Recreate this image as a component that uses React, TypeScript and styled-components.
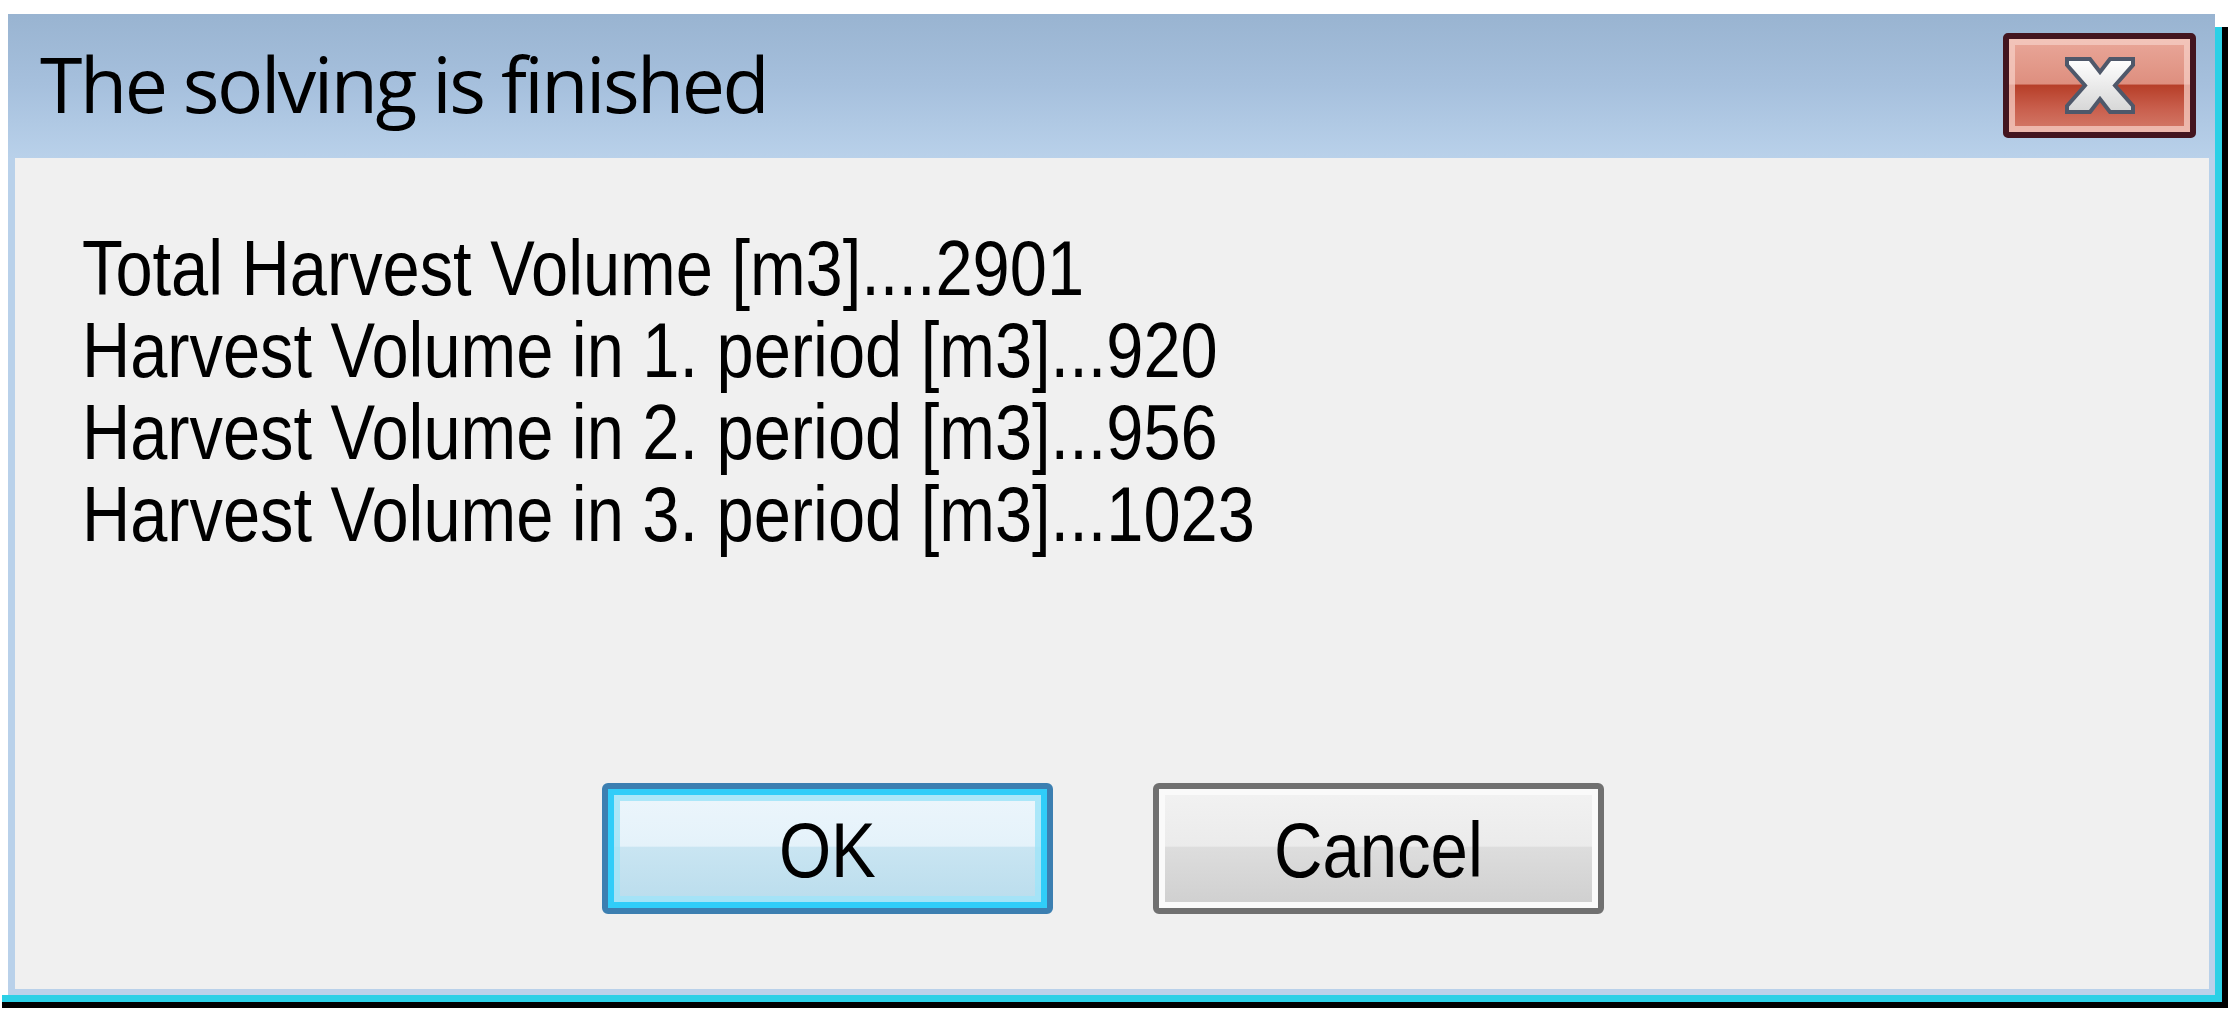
import React from "react";
import styled, { createGlobalStyle } from "styled-components";

const GlobalStyle = createGlobalStyle`
  html, body {
    margin: 0;
    padding: 0;
    background: #ffffff;
  }
  body {
    width: 2238px;
    height: 1021px;
    overflow: hidden;
  }
`;

const Page = styled.div`
  padding-top: 14px;
`;

const Window = styled.div`
  margin-left: 8px;
  width: 2207px;
  height: 981px;
  display: flex;
  flex-direction: column;
  background: #b9d1ea;
  box-shadow: 7px 13px 0 0 #2bd0e6, 13px 13px 0 0 #000000;
`;

const TitleBar = styled.div`
  height: 144px;
  flex-shrink: 0;
  display: flex;
  align-items: flex-start;
  padding: 0 19px 0 32px;
  background: linear-gradient(#99b4d1 0%, #a6c0dd 50%, #b9d1ea 100%);
`;

const Title = styled.div`
  padding-top: 17px;
  font-family: "Open Sans", "Noto Sans", sans-serif;
  font-size: 77px;
  line-height: 105px;
  letter-spacing: -2.5px;
  color: #000000;
  white-space: nowrap;
`;

const CloseButton = styled.div`
  margin-left: auto;
  margin-top: 19px;
  width: 193px;
  height: 105px;
  box-sizing: border-box;
  border: 6px solid #43151f;
  border-radius: 5px;
  display: flex;
  align-items: center;
  justify-content: center;
  background: linear-gradient(
    #e9a799 0%,
    #de8f7f 48%,
    #b73f29 50%,
    #c95f4d 75%,
    #d47b6a 100%
  );
  box-shadow: inset 0 0 0 6px rgba(246, 206, 196, 0.75);
`;

const Content = styled.div`
  flex: 1;
  margin: 0 6px 6px 7px;
  background: #f0f0f0;
  display: flex;
  flex-direction: column;
  padding: 69px 0 75px 67px;
  box-sizing: border-box;
`;

/* MS Sans Serif look: Arial metrics squeezed to the narrow width of the original */
const Lines = styled.div`
  font-family: "Liberation Sans", Arial, sans-serif;
  font-size: 78px;
  line-height: 82px;
  color: #000000;
  transform: scaleX(0.856);
  transform-origin: left top;
`;

const Line = styled.div`
  white-space: nowrap;
`;

const ButtonRow = styled.div`
  margin-top: auto;
  margin-left: 520px;
  display: flex;
  gap: 100px;
`;

const Button = styled.div<{ $primary?: boolean }>`
  width: 451px;
  height: 131px;
  box-sizing: border-box;
  border: 6px solid ${(p) => (p.$primary ? "#3c7fb1" : "#707070")};
  border-radius: 6px;
  display: flex;
  align-items: center;
  justify-content: center;
  font-family: "Liberation Sans", Arial, sans-serif;
  font-size: 78px;
  color: #000000;
  background: ${(p) =>
    p.$primary
      ? "linear-gradient(#edf6fc 0%, #e4f2fa 48%, #c9e5f2 49%, #b9dcec 100%)"
      : "linear-gradient(#f2f2f2 0%, #ebebeb 48%, #dddddd 49%, #cfcfcf 100%)"};
  box-shadow: ${(p) =>
    p.$primary
      ? "inset 0 0 0 6px #30cdf9, inset 0 0 0 12px rgba(160, 228, 248, 0.85)"
      : "inset 0 0 0 6px #fafafa"};
`;

const Label = styled.span`
  display: inline-block;
  transform: scaleX(0.86);
  margin-top: 4px;
`;

const BottomCyan = styled.div`
  margin-left: 2px;
  width: 2220px;
  height: 7px;
  background: #2bd0e6;
`;

const BottomBlack = styled.div`
  margin-left: 2px;
  width: 2226px;
  height: 6px;
  background: #000000;
`;

const CloseGlyph = () => (
  <svg width="70" height="57" viewBox="-1 -1 70 57">
    <defs>
      <linearGradient id="xfill" x1="0" y1="0" x2="0" y2="1">
        <stop offset="0" stopColor="#ffffff" />
        <stop offset="1" stopColor="#d6d6d6" />
      </linearGradient>
    </defs>
    <polygon
      points="1,1 24,1 34,14 44,1 67,1 67,7 49,27.5 67,48 67,54 44,54 34,41 24,54 1,54 1,48 19,27.5 1,7"
      fill="url(#xfill)"
      stroke="#4f586a"
      strokeWidth="4"
      strokeLinejoin="miter"
    />
  </svg>
);

export default function App() {
  return (
    <>
      <GlobalStyle />
      <Page>
        <Window>
          <TitleBar>
            <Title>The solving is finished</Title>
            <CloseButton>
              <CloseGlyph />
            </CloseButton>
          </TitleBar>
          <Content>
            <Lines>
              <Line>Total Harvest Volume [m3]....2901</Line>
              <Line>Harvest Volume in 1. period [m3]...920</Line>
              <Line>Harvest Volume in 2. period [m3]...956</Line>
              <Line>Harvest Volume in 3. period [m3]...1023</Line>
            </Lines>
            <ButtonRow>
              <Button $primary>
                <Label>OK</Label>
              </Button>
              <Button>
                <Label>Cancel</Label>
              </Button>
            </ButtonRow>
          </Content>
        </Window>
        <BottomCyan />
        <BottomBlack />
      </Page>
    </>
  );
}
